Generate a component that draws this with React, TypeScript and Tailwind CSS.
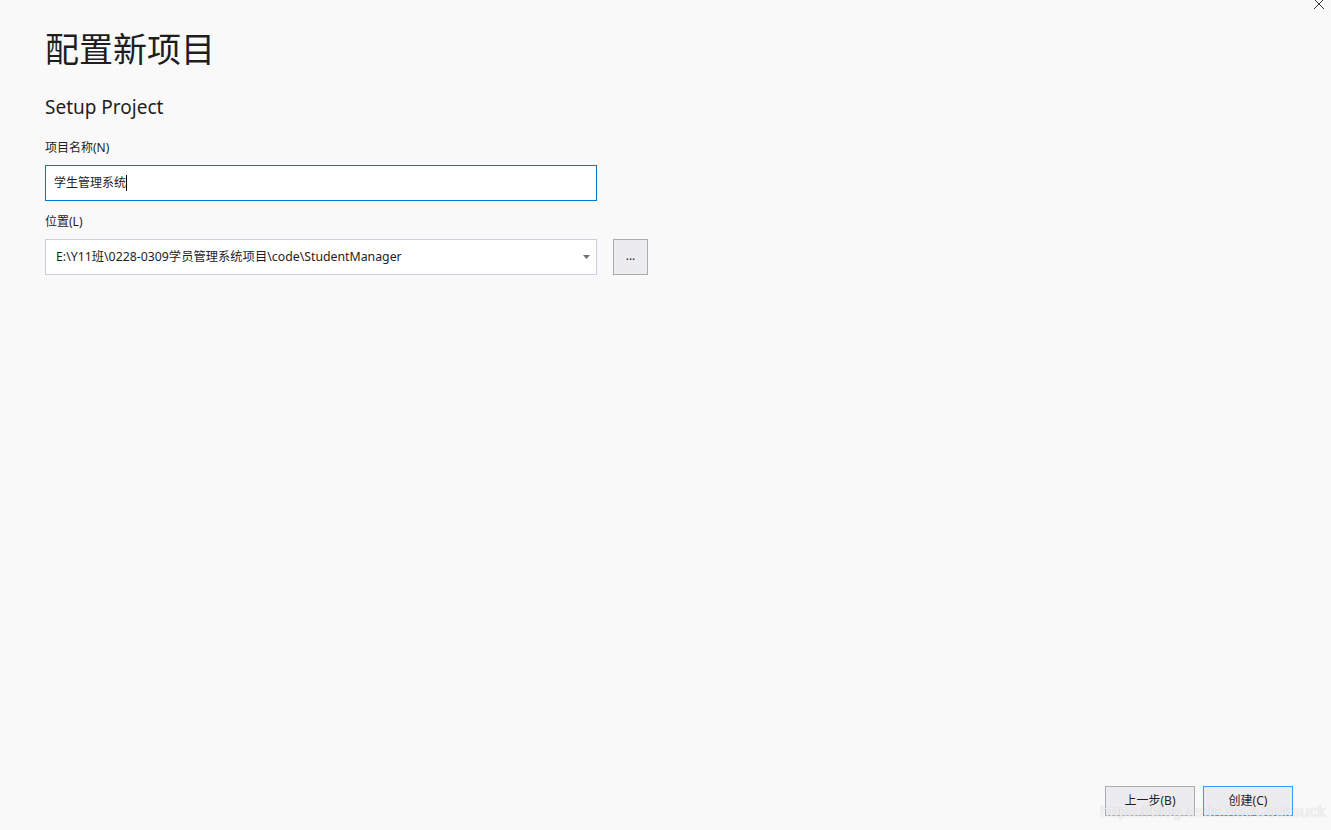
import React from "react";

export default function App() {
  const font = { fontFamily: '"Noto Sans", "Noto Sans CJK SC", sans-serif' };
  return (
    <div
      className="relative w-[1331px] h-[830px] overflow-hidden bg-[#f9f9f9] text-[#1e1e1e]"
      style={font}
    >
      <div className="absolute right-[6px] top-[-3px] text-[16px] leading-none text-[#444]">
        <svg width="12" height="12" viewBox="0 0 12 12" className="mt-[1px]">
          <path d="M1 1 L11 11 M11 1 L1 11" stroke="#333" strokeWidth="1" />
        </svg>
      </div>
      <div className="flex flex-col pl-[45px] pt-[26px]">
        <h1 className="text-[34px] leading-[46px] font-normal">配置新项目</h1>
        <h2 className="mt-[22px] text-[19px] leading-[26px]">Setup Project</h2>
        <label className="mt-[19px] text-[12px] leading-[18px]">项目名称(N)</label>
        <div className="mt-[8px] w-[552px] h-[36px] border border-[#0078d7] bg-white flex items-center pl-[8px] text-[12px]">
          <span>学生管理系统</span>
          <span className="inline-block w-[1px] h-[16px] bg-black" />
        </div>
        <label className="mt-[12px] text-[12px] leading-[18px]">位置(L)</label>
        <div className="mt-[8px] flex items-center gap-[16px]">
          <div className="w-[552px] h-[36px] border border-[#cccedb] bg-white flex items-center justify-between pl-[10px] pr-[6px] text-[12.3px]">
            <span>E:\Y11班\0228-0309学员管理系统项目\code\StudentManager</span>
            <svg width="7" height="4" viewBox="0 0 7 4">
              <path d="M0 0 H7 L3.5 4 Z" fill="#717171" />
            </svg>
          </div>
          <button className="w-[35px] h-[36px] border border-[#acacac] bg-[#ececf0] text-[12px] leading-none pb-[2px]">
            ...
          </button>
        </div>
      </div>
      <div className="absolute left-[1105px] top-[786px] flex gap-[8px]">
        <button className="w-[90px] h-[30px] border border-[#acacac] bg-[#ececf0] text-[12px]">
          上一步(B)
        </button>
        <button className="w-[90px] h-[30px] border border-[#3399ff] bg-[#ececf0] text-[12px]">
          创建(C)
        </button>
      </div>
      <div
        className="absolute left-[1100px] top-[800px] text-[16px] text-white/80 tracking-[0.3px] pointer-events-none"
        style={{ fontFamily: '"Liberation Sans", sans-serif', textShadow: "0 0 1px rgba(0,0,0,0.25)" }}
      >
        https://blog.csdn.net/Cocksuck
      </div>
    </div>
  );
}
